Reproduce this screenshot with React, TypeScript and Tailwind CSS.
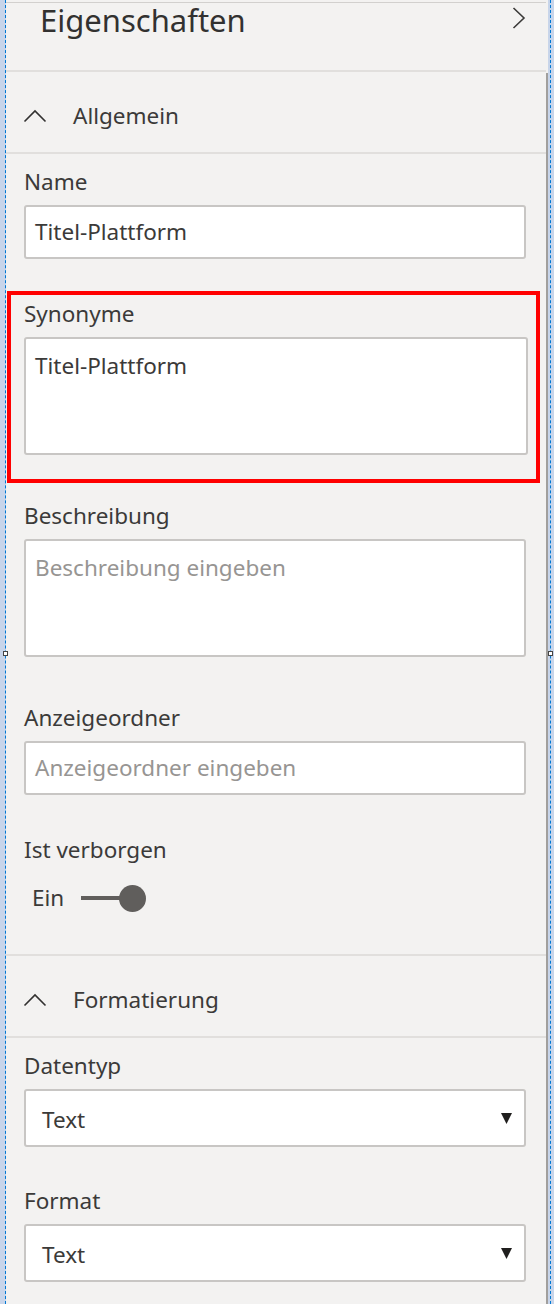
import { useState } from 'react';

const FONT = { fontFamily: '"Noto Sans", "Open Sans", sans-serif' };

function ChevronUp() {
  return (
    <svg width="24" height="14" viewBox="0 0 24 14" className="shrink-0">
      <path d="M1.5 12.5 L12 2 L22.5 12.5" fill="none" stroke="#323130" strokeWidth="1.6" />
    </svg>
  );
}

function SectionHeader({ title }: { title: string }) {
  return (
    <>
      <div className="flex h-[80px] items-start pt-[30px]">
        <div className="flex h-[28px] items-center pl-[17px]">
          <ChevronUp />
          <span className="ml-[26px] text-[22.5px] leading-[28px] text-[#3b3a39]">{title}</span>
        </div>
      </div>
      <div className="h-[2px] bg-[#e1dfdd]" />
    </>
  );
}

function Label({ children }: { children: string }) {
  return <div className="mb-[9px] h-[28px] text-[22.5px] leading-[28px] text-[#3b3a39]">{children}</div>;
}

function TextBox({ value, placeholder, tall }: { value?: string; placeholder?: string; tall?: boolean }) {
  return (
    <div
      className={`rounded-[3px] border-2 border-[#c8c6c4] bg-white px-[9px] text-[22.5px] leading-[28px] ${
        tall ? 'h-[118px] pt-[13px]' : 'flex h-[54px] items-center'
      } ${value ? 'text-[#3b3a39]' : 'text-[#979593]'}`}
    >
      {value ?? placeholder}
    </div>
  );
}

function Dropdown({ value }: { value: string }) {
  return (
    <div className="flex h-[58px] items-center justify-between rounded-[3px] border-2 border-[#c8c6c4] bg-white pl-[16px] pr-[12px] pt-[3px] text-[22.5px] text-[#3b3a39]">
      <span>{value}</span>
      <svg width="11" height="11" viewBox="0 0 11 11" className="-mt-[3px]">
        <path d="M0 0 H11 L5.5 11 Z" fill="#201f1e" />
      </svg>
    </div>
  );
}

function Toggle({ on }: { on: boolean }) {
  return (
    <div className="mt-[18px] flex h-[32px] items-center pl-[8px]">
      <span className="text-[22.5px] text-[#3b3a39]">{on ? 'Ein' : 'Aus'}</span>
      <div className="ml-[17px] flex items-center">
        <div className="h-[4px] w-[40px] bg-[#605e5c]" />
        <div className="-ml-[2px] h-[27px] w-[27px] rounded-full bg-[#605e5c]" />
      </div>
    </div>
  );
}

export default function App() {
  const [hidden] = useState(true);

  return (
    <div style={FONT} className="relative flex h-[1304px] w-[554px] overflow-hidden bg-[#c8d5ea]">
      <div className="w-[5px]" />
      <div className="w-px border-l border-dashed border-[#0078d4]" />

      <div className="flex flex-1 flex-col bg-[#f3f2f1]">
        <div className="mt-[2px] h-px bg-[#d2d0ce]" />
        <div className="flex h-[67px] items-start justify-between pl-[34px] pr-[20px]">
          <span className="text-[31px] leading-[34px] text-[#323130]">Eigenschaften</span>
          <svg width="14" height="22" viewBox="0 0 14 22" className="mt-[4px]">
            <path d="M1.5 1 L12 11 L1.5 21" fill="none" stroke="#3b3a39" strokeWidth="1.6" />
          </svg>
        </div>
        <div className="h-[2px] bg-[#e1dfdd]" />

        <SectionHeader title="Allgemein" />

        <div className="pt-[14px]">
          <div className="pl-[18px] pr-[20px]">
            <Label>Name</Label>
            <TextBox value="Titel-Plattform" />
          </div>

          <div className="ml-px mr-[6px] mt-[32px] border-4 border-[#ff0000] pb-[24px] pl-[13px] pr-[8px] pt-[5px]">
            <Label>Synonyme</Label>
            <TextBox value="Titel-Plattform" tall />
          </div>

          <div className="pl-[18px] pr-[20px]">
            <div className="mt-[19px]">
              <Label>Beschreibung</Label>
              <TextBox placeholder="Beschreibung eingeben" tall />
            </div>
            <div className="mt-[47px]">
              <Label>Anzeigeordner</Label>
              <TextBox placeholder="Anzeigeordner eingeben" />
            </div>
            <div className="mt-[41px] h-[28px] text-[22.5px] leading-[28px] text-[#3b3a39]">Ist verborgen</div>
            <Toggle on={hidden} />
          </div>
        </div>

        <div className="mt-[40px] h-[2px] bg-[#e1dfdd]" />
        <SectionHeader title="Formatierung" />

        <div className="pl-[18px] pr-[20px] pt-[14px]">
          <Label>Datentyp</Label>
          <Dropdown value="Text" />
          <div className="mt-[40px]">
            <Label>Format</Label>
            <Dropdown value="Text" />
          </div>
        </div>
      </div>

      <div className="flex w-[2px] flex-col">
        <div className="h-[73px] bg-[#f3f2f1]" />
        <div className="flex-1 bg-[#a19f9d]" />
      </div>
      <div className="w-[2px]" />
      <div className="w-px border-l border-dashed border-[#0078d4]" />
      <div className="w-[3px]" />

      <div className="absolute left-[3px] top-[651px] h-[5px] w-[5px] border border-[#444] bg-white" />
      <div className="absolute left-[548px] top-[651px] h-[5px] w-[5px] border border-[#444] bg-white" />
    </div>
  );
}
